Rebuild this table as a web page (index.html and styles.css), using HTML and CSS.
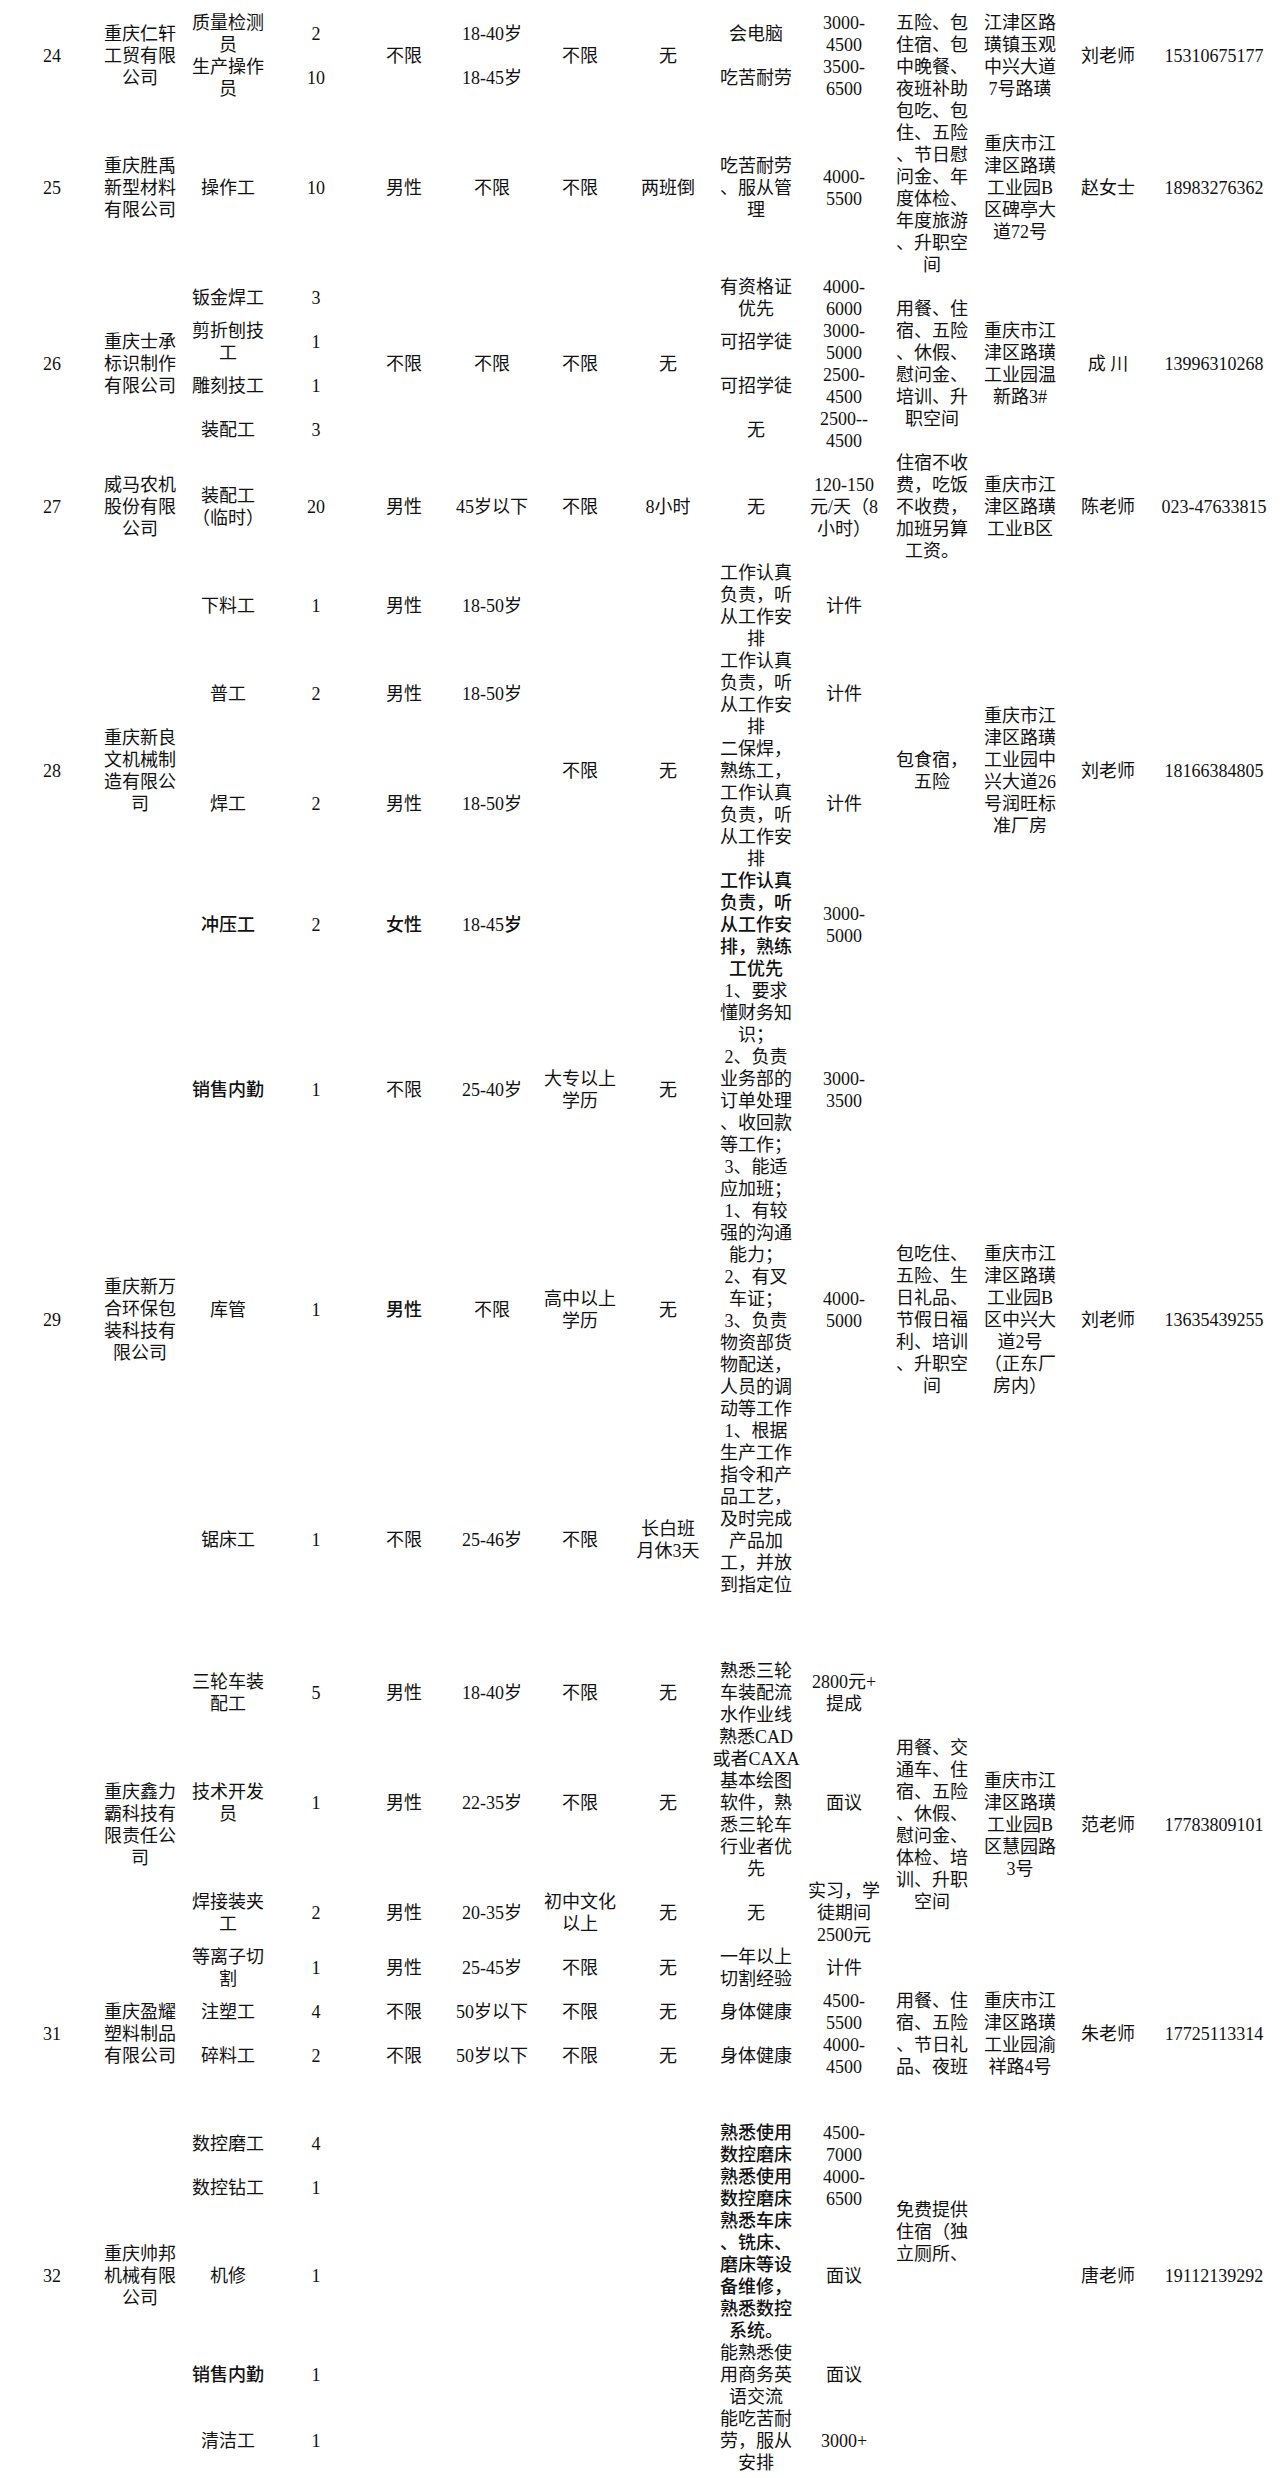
FILE: index.html
```html
<!DOCTYPE html>
<html lang="zh-CN">
<head>
<meta charset="utf-8">
<title>招聘岗位</title>
<link rel="stylesheet" href="styles.css">
</head>
<body>
<table class="jobs">
<colgroup>
<col class="c"><col class="c"><col class="c"><col class="c"><col class="c"><col class="c"><col class="c">
<col class="c"><col class="c"><col class="c"><col class="c"><col class="c"><col class="c"><col class="phone">
</colgroup>
<tbody>
<!-- 24 -->
<tr>
<td rowspan="2">24</td><td rowspan="2">重庆仁轩<br>工贸有限<br>公司</td>
<td>质量检测<br>员</td><td>2</td><td rowspan="2">不限</td><td>18-40岁</td><td rowspan="2">不限</td><td rowspan="2">无</td>
<td>会电脑</td><td>3000-<br>4500</td>
<td rowspan="2">五险、包<br>住宿、包<br>中晚餐、<br>夜班补助</td>
<td rowspan="2">江津区路<br>璜镇玉观<br>中兴大道<br>7号路璜</td>
<td rowspan="2">刘老师</td><td rowspan="2">15310675177</td>
</tr>
<tr>
<td>生产操作<br>员</td><td>10</td><td>18-45岁</td><td>吃苦耐劳</td><td>3500-<br>6500</td>
</tr>
<!-- 25 -->
<tr>
<td>25</td><td>重庆胜禹<br>新型材料<br>有限公司</td><td>操作工</td><td>10</td><td>男性</td><td>不限</td><td>不限</td><td>两班倒</td>
<td>吃苦耐劳<br>、服从管<br>理</td><td>4000-<br>5500</td>
<td>包吃、包<br>住、五险<br>、节日慰<br>问金、年<br>度体检、<br>年度旅游<br>、升职空<br>间</td>
<td>重庆市江<br>津区路璜<br>工业园B<br>区碑亭大<br>道72号</td>
<td>赵女士</td><td>18983276362</td>
</tr>
<!-- 26 -->
<tr>
<td rowspan="4">26</td><td rowspan="4">重庆士承<br>标识制作<br>有限公司</td>
<td>钣金焊工</td><td>3</td><td rowspan="4">不限</td><td rowspan="4">不限</td><td rowspan="4">不限</td><td rowspan="4">无</td>
<td>有资格证<br>优先</td><td>4000-<br>6000</td>
<td rowspan="4">用餐、住<br>宿、五险<br>、休假、<br>慰问金、<br>培训、升<br>职空间</td>
<td rowspan="4">重庆市江<br>津区路璜<br>工业园温<br>新路3#</td>
<td rowspan="4">成&nbsp;川</td><td rowspan="4">13996310268</td>
</tr>
<tr><td>剪折刨技<br>工</td><td>1</td><td>可招学徒</td><td>3000-<br>5000</td></tr>
<tr><td>雕刻技工</td><td>1</td><td>可招学徒</td><td>2500-<br>4500</td></tr>
<tr><td>装配工</td><td>3</td><td>无</td><td>2500--<br>4500</td></tr>
<!-- 27 -->
<tr>
<td>27</td><td>威马农机<br>股份有限<br>公司</td><td>装配工<br>（临时）</td><td>20</td><td>男性</td><td>45岁以下</td><td>不限</td><td>8小时</td>
<td>无</td><td>120-150<br>元/天（8<br>小时）</td>
<td>住宿不收<br>费，吃饭<br>不收费，<br>加班另算<br>工资。</td>
<td>重庆市江<br>津区路璜<br>工业B区</td>
<td>陈老师</td><td>023-47633815</td>
</tr>
<!-- 28 -->
<tr>
<td rowspan="4">28</td><td rowspan="4">重庆新良<br>文机械制<br>造有限公<br>司</td>
<td>下料工</td><td>1</td><td>男性</td><td>18-50岁</td><td rowspan="4">不限</td><td rowspan="4">无</td>
<td>工作认真<br>负责，听<br>从工作安<br>排</td><td>计件</td>
<td rowspan="4">包食宿，<br>五险</td>
<td rowspan="4">重庆市江<br>津区路璜<br>工业园中<br>兴大道26<br>号润旺标<br>准厂房</td>
<td rowspan="4">刘老师</td><td rowspan="4">18166384805</td>
</tr>
<tr><td>普工</td><td>2</td><td>男性</td><td>18-50岁</td><td>工作认真<br>负责，听<br>从工作安<br>排</td><td>计件</td></tr>
<tr><td>焊工</td><td>2</td><td>男性</td><td>18-50岁</td><td>二保焊，<br>熟练工，<br>工作认真<br>负责，听<br>从工作安<br>排</td><td>计件</td></tr>
<tr class="b"><td>冲压工</td><td>2</td><td>女性</td><td>18-45岁</td><td>工作认真<br>负责，听<br>从工作安<br>排，熟练<br>工优先</td><td>3000-<br>5000</td></tr>
<!-- 29 -->
<tr>
<td rowspan="3">29</td><td rowspan="3">重庆新万<br>合环保包<br>装科技有<br>限公司</td>
<td class="b">销售内勤</td><td>1</td><td>不限</td><td>25-40岁</td><td>大专以上<br>学历</td><td>无</td>
<td>1、要求<br>懂财务知<br>识；<br>2、负责<br>业务部的<br>订单处理<br>、收回款<br>等工作；<br>3、能适<br>应加班；</td><td>3000-<br>3500</td>
<td rowspan="3">包吃住、<br>五险、生<br>日礼品、<br>节假日福<br>利、培训<br>、升职空<br>间</td>
<td rowspan="3">重庆市江<br>津区路璜<br>工业园B<br>区中兴大<br>道2号<br>（正东厂<br>房内）</td>
<td rowspan="3">刘老师</td><td rowspan="3">13635439255</td>
</tr>
<tr><td>库管</td><td>1</td><td class="b">男性</td><td>不限</td><td>高中以上<br>学历</td><td>无</td>
<td>1、有较<br>强的沟通<br>能力；<br>2、有叉<br>车证；<br>3、负责<br>物资部货<br>物配送，<br>人员的调<br>动等工作</td><td>4000-<br>5000</td></tr>
<tr class="tall"><td>锯床工</td><td>1</td><td>不限</td><td>25-46岁</td><td>不限</td><td>长白班<br>月休3天</td>
<td class="top">1、根据<br>生产工作<br>指令和产<br>品工艺，<br>及时完成<br>产品加<br>工，并放<br>到指定位</td><td></td></tr>
<!-- 30 -->
<tr>
<td rowspan="4"></td><td rowspan="4">重庆鑫力<br>霸科技有<br>限责任公<br>司</td>
<td>三轮车装<br>配工</td><td>5</td><td>男性</td><td>18-40岁</td><td>不限</td><td>无</td>
<td>熟悉三轮<br>车装配流<br>水作业线</td><td>2800元+<br>提成</td>
<td rowspan="4">用餐、交<br>通车、住<br>宿、五险<br>、休假、<br>慰问金、<br>体检、培<br>训、升职<br>空间</td>
<td rowspan="4">重庆市江<br>津区路璜<br>工业园B<br>区慧园路<br>3号</td>
<td rowspan="4">范老师</td><td rowspan="4">17783809101</td>
</tr>
<tr><td>技术开发<br>员</td><td>1</td><td>男性</td><td>22-35岁</td><td>不限</td><td>无</td>
<td>熟悉CAD<br>或者CAXA<br>基本绘图<br>软件，熟<br>悉三轮车<br>行业者优<br>先</td><td>面议</td></tr>
<tr><td>焊接装夹<br>工</td><td>2</td><td>男性</td><td>20-35岁</td><td>初中文化<br>以上</td><td>无</td><td>无</td><td>实习，学<br>徒期间<br>2500元</td></tr>
<tr><td>等离子切<br>割</td><td>1</td><td>男性</td><td>25-45岁</td><td>不限</td><td>无</td><td>一年以上<br>切割经验</td><td>计件</td></tr>
<!-- 31 -->
<tr>
<td rowspan="2">31</td><td rowspan="2">重庆盈耀<br>塑料制品<br>有限公司</td>
<td>注塑工</td><td>4</td><td>不限</td><td>50岁以下</td><td>不限</td><td>无</td><td>身体健康</td><td>4500-<br>5500</td>
<td rowspan="2">用餐、住<br>宿、五险<br>、节日礼<br>品、夜班</td>
<td rowspan="2">重庆市江<br>津区路璜<br>工业园渝<br>祥路4号</td>
<td rowspan="2">朱老师</td><td rowspan="2">17725113314</td>
</tr>
<tr><td>碎料工</td><td>2</td><td>不限</td><td>50岁以下</td><td>不限</td><td>无</td><td>身体健康</td><td>4000-<br>4500</td></tr>
<!-- 32 -->
<tr class="blank">
<td rowspan="6">32</td><td rowspan="6">重庆帅邦<br>机械有限<br>公司</td>
<td></td><td></td><td rowspan="6"></td><td rowspan="6"></td><td rowspan="6"></td><td rowspan="6"></td>
<td></td><td></td><td></td>
<td rowspan="6"></td><td rowspan="6">唐老师</td><td rowspan="6">19112139292</td>
</tr>
<tr><td>数控磨工</td><td>4</td><td class="b">熟悉使用<br>数控磨床</td><td>4500-<br>7000</td>
<td rowspan="3">免费提供<br>住宿（独<br>立厕所、</td></tr>
<tr><td>数控钻工</td><td>1</td><td class="b">熟悉使用<br>数控磨床</td><td>4000-<br>6500</td></tr>
<tr><td>机修</td><td>1</td><td class="b">熟悉车床<br>、铣床、<br>磨床等设<br>备维修，<br>熟悉数控<br>系统。</td><td>面议</td></tr>
<tr><td class="b">销售内勤</td><td class="b">1</td><td>能熟悉使<br>用商务英<br>语交流</td><td>面议</td><td></td></tr>
<tr><td>清洁工</td><td>1</td><td>能吃苦耐<br>劳，服从<br>安排</td><td>3000+</td><td></td></tr>
</tbody>
</table>
</body>
</html>
```

FILE: styles.css
```css
html, body {
  margin: 0;
  padding: 0;
  background: #ffffff;
}

body {
  padding: 12px 0 0 8px;
  color: #111111;
  font-family: "Liberation Serif", "Noto Sans CJK SC", serif;
  font-size: 18px;
  line-height: 22px;
}

.jobs {
  border-collapse: collapse;
  border-spacing: 0;
  table-layout: fixed;
  width: 1268px;
}

.jobs col.c {
  width: 88px;
}

.jobs col.phone {
  width: 124px;
}

.jobs td {
  padding: 0;
  text-align: center;
  vertical-align: middle;
  white-space: nowrap;
  font-weight: 400;
}

.jobs tr.tall {
  height: 240px;
}

.jobs tr.blank {
  height: 44px;
}

.jobs td.top {
  vertical-align: top;
}

.jobs td.b,
.jobs tr.b td {
  font-weight: 500;
}
```
